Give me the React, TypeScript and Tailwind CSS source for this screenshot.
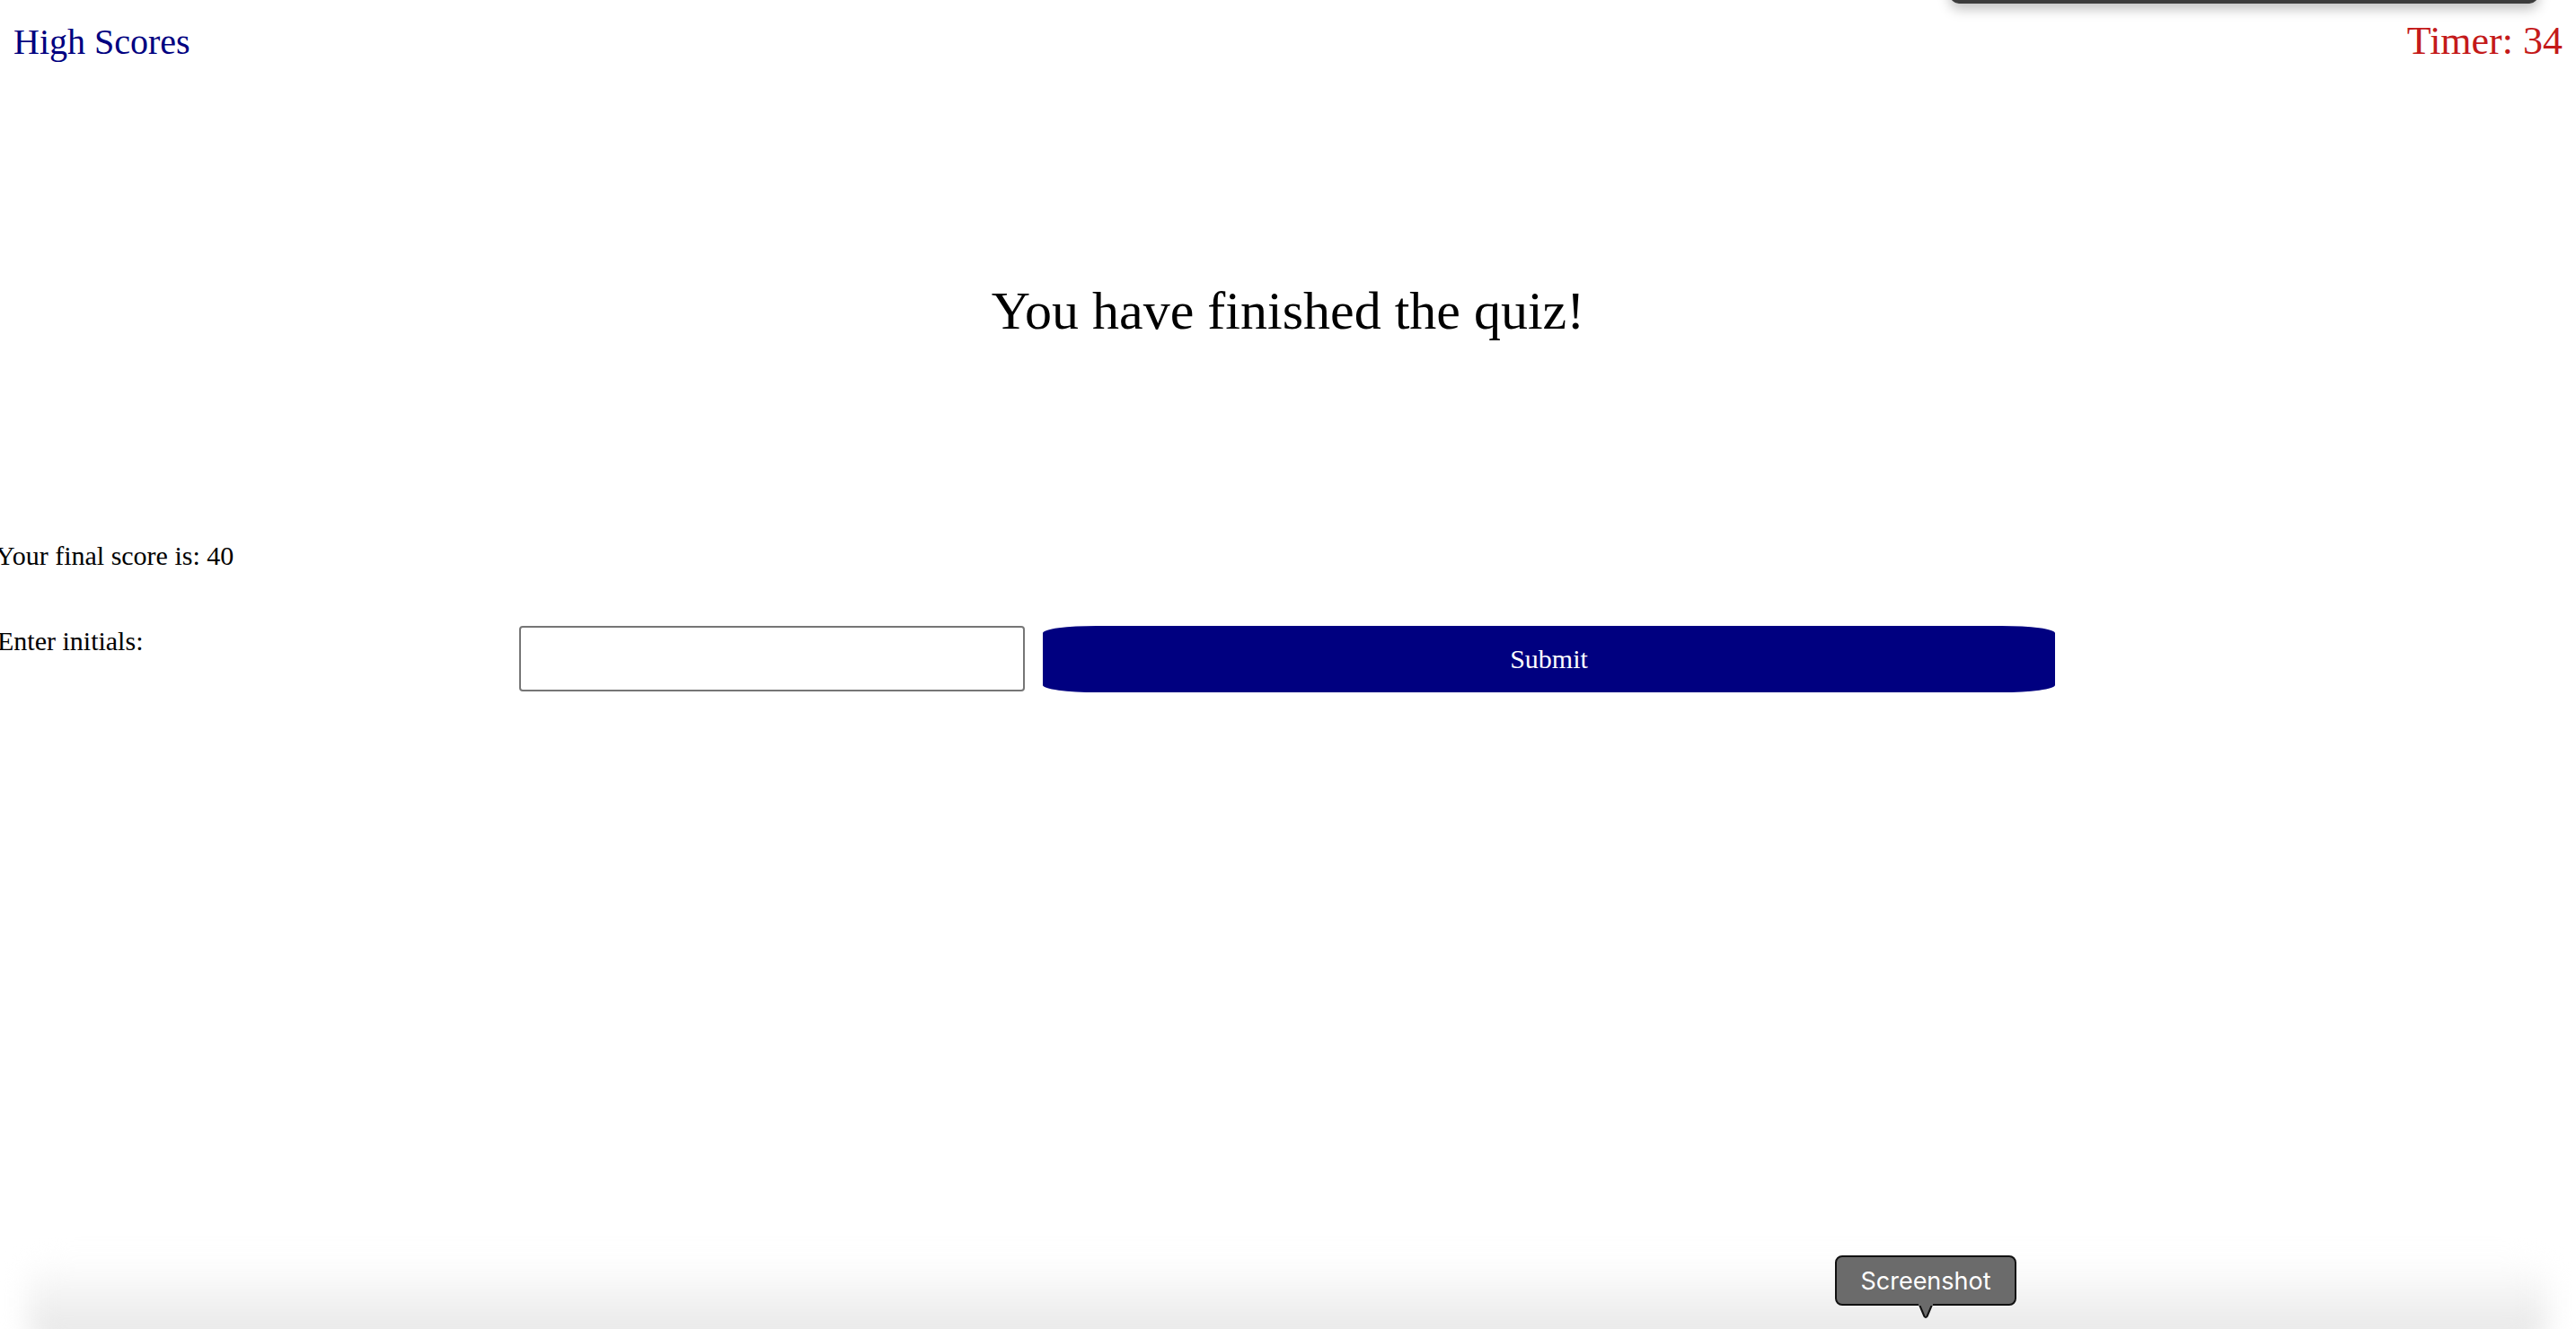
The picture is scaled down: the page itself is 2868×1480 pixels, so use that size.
import React from "react";

const serif = "font-['Liberation_Serif','Times_New_Roman',serif]";

function Tooltip() {
  return (
    <div className="absolute left-[2043px] top-[1398px] flex flex-col items-center">
      <div className="flex h-[56px] w-[202px] items-center justify-center rounded-[8px] border-2 border-[#111] bg-[#6b6b6b] font-['Inter',sans-serif] text-[27px] leading-none text-white">
        Screenshot
      </div>
      <svg width="32" height="18" viewBox="0 0 32 18" className="-mt-[3px]">
        <path d="M9 2 L14.5 15 Q16 17 17.5 15 L23 2" fill="#6b6b6b" stroke="#111" strokeWidth="2" strokeLinejoin="round" />
        <rect x="8" y="0" width="16" height="3" fill="#6b6b6b" />
      </svg>
    </div>
  );
}

export default function App() {
  return (
    <div className={`relative h-[1480px] w-full overflow-hidden bg-white ${serif} text-black`}>
      {/* header */}
      <div className="flex items-start justify-between px-[15px]">
        <a className="mt-[24px] text-[40px] leading-[1.15] text-[#000080]">High Scores</a>
        <div className="mt-[21px] text-[44px] leading-[1.15] text-[#c41a1a]">Timer: 34</div>
      </div>

      <h1 className="mt-[240px] text-center text-[60px] font-normal leading-[1.15]">
        You have finished the quiz!
      </h1>

      <p className="mt-[221px] -ml-[5px] text-[30px] leading-[1.15]">Your final score is: 40</p>

      <form className="mt-[61px] flex items-start">
        <label className="-ml-[3px] w-[581px] text-[30px] leading-[1.15]">Enter initials:</label>
        <input
          type="text"
          className="h-[73px] w-[563px] rounded-[4px] border-2 border-[#767676] bg-white px-2 text-[29px]"
        />
        <button
          type="button"
          className="ml-[20px] h-[74px] w-[1127px] rounded-[60px/8px] bg-[#000080] text-[30px] leading-none text-white"
        >
          Submit
        </button>
      </form>

      {/* window edge peeking at the top */}
      <div className="absolute left-[2171px] top-[-40px] h-[44px] w-[655px] rounded-b-[10px] bg-[#3c3c3c] shadow-[0_6px_14px_rgba(0,0,0,0.25)]" />

      {/* toolbar shadow at the bottom */}
      <div className="absolute bottom-[-20px] left-[30px] right-[30px] h-[100px] rounded-[30px] bg-gradient-to-b from-white to-[#e4e4e4] blur-[14px]" />

      <Tooltip />
    </div>
  );
}
